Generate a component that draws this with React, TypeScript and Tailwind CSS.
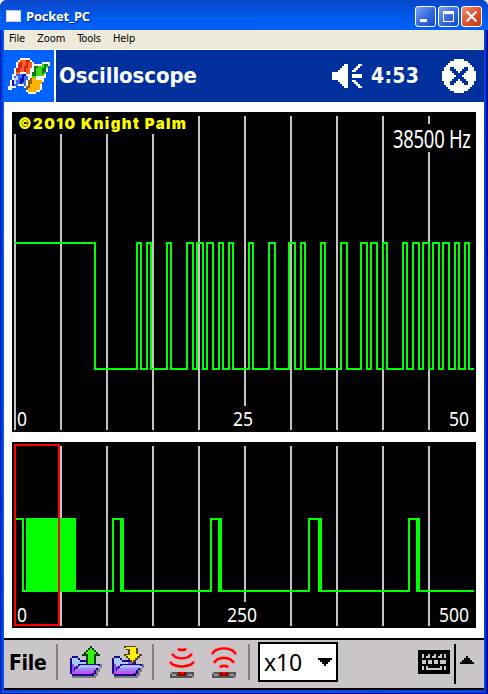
import React from 'react';

const MENU = ['File', 'Zoom', 'Tools', 'Help'];

const GRID = [2, 48, 94, 140, 186, 232, 278, 324, 370, 416];

// [rise, fall] positions of every pulse in the detail view
const PULSES = [
  [124, 128],
  [134, 138],
  [154, 158],
  [174, 180],
  [184, 190],
  [194, 200],
  [206, 210],
  [216, 220],
  [236, 240],
  [256, 262],
  [276, 282],
  [288, 292],
  [308, 312],
  [328, 334],
  [348, 354],
  [358, 364],
  [370, 374],
  [390, 394],
  [400, 406],
  [410, 416],
  [420, 426],
  [430, 436],
  [442, 446],
  [452, 456],
];

// [rise, fall] for the bursts in the overview
const BURSTS = [
  [100, 108],
  [198, 206],
  [296, 306],
  [396, 404],
];

const windowsLogo = (
  <svg viewBox="24 174 126 108" className="h-9 w-[42px]" shapeRendering="crispEdges">
    <path
      fill="#fff"
      d="M60 174H90V180H96V186H102V192H126V186H150V198H144V216H138V234H132V246H126V270H120V276H108V282H84V276H78V264H72V258H48V264H36V270H24V258H30V240H36V222H42V204H48V186H54V180H60Z"
    />
    <path fill="#ff5a20" d="M60 180H90V186H96V204H90V222H78V216H60V222H48V204H54V186H60Z" />
    <path fill="#c82810" d="M54 192H60V186H66V204H60V216H48V204H54ZM78 180H90V186H84V204H78V216H72V198H78Z" />
    <path fill="#40d818" d="M102 198H126V192H144V204H138V222H132V228H108V234H96V222H102Z" />
    <path fill="#147814" d="M102 198H114V204H108V228H96V216H102ZM132 192H144V198H138V216H132V222H126V204H132Z" />
    <path fill="#3968ff" d="M48 222H78V228H84V240H78V258H72V252H54V258H36V246H42V228H48Z" />
    <path fill="#1010a0" d="M66 222H78V228H72V246H66V252H60V234H66ZM36 240H42V258H36Z" />
    <path fill="#b8d8ff" d="M48 228H54V240H48V252H42V234H48Z" />
    <path fill="#ffb000" d="M90 234H108V240H126V252H120V270H108V276H84V270H78V258H84V240H90Z" />
    <path fill="#906400" d="M90 234H96V252H90V264H84V270H78V258H84V240H90Z" />
  </svg>
);

const speaker = (
  <svg viewBox="264 192 90 72" className="h-6 w-[30px]" shapeRendering="crispEdges" fill="#fff">
    <path d="M264 216H282V210H288V204H294V198H300V192H312V264H300V258H294V252H288V246H282V240H264Z" />
    <path d="M324 222H354V234H324ZM324 210H330V204H336V198H342V192H354V198H348V204H342V210H336V216H324ZM324 240H336V246H342V252H348V258H354V264H342V258H336V252H330V246H324Z" />
  </svg>
);

const closeCircle = (
  <svg viewBox="594 174 102 102" className="h-[34px] w-[34px]" shapeRendering="crispEdges">
    <path
      fill="#fff"
      d="M630 174H660V180H672V186H678V192H684V198H690V210H696V240H690V252H684V258H678V264H672V270H660V276H630V270H618V264H612V258H606V252H600V240H594V210H600V198H606V192H612V186H618V180H630Z"
    />
    <path
      fill="#00309c"
      d="M618 198H630V204H636V210H642V216H648V210H654V204H660V198H672V210H666V216H660V222H654V228H660V234H666V240H672V252H660V246H654V240H648V234H642V240H636V246H630V252H618V240H624V234H630V228H636V222H630V216H624V210H618Z"
    />
  </svg>
);

const folder = (
  <>
    <path fill="#7b7b80" d="M222 228H282V222H288V210H294V204H300V192H306V204H300V216H294V228H288V234H216V228Z" />
    <path fill="#180890" d="M216 168H234V174H240V180H282V192H300V198H294V210H288V222H282V228H216V222H210V174H216Z" />
    <path fill="#a8ccff" d="M216 174H234V180H240V186H258V192H234V198H222V192H216Z" />
    <path fill="#9448f0" d="M216 192H222V198H228V204H222V216H216ZM258 186H276V192H258Z" />
    <path fill="#b0b4ff" d="M240 194H294V204H234V198H240Z" />
    <path fill="#9888fc" d="M230 204H288V210H282V213H226V208H230Z" />
    <path fill="#c850f0" d="M222 213H282V218H276V222H216V217H222Z" />
  </>
);

const openIcon = (
  <svg viewBox="210 138 96 96" className="h-8 w-8" shapeRendering="crispEdges">
    {folder}
    <path fill="#084008" d="M270 138H276V144H282V150H288V156H294V162H300V168H288V192H258V168H246V162H252V156H258V150H264V144H270Z" />
    <path fill="#38f010" d="M270 144H276V150H282V156H288V162H282V192H264V162H258V156H264V150H270Z" />
  </svg>
);

const saveIcon = (
  <svg viewBox="210 138 96 96" className="h-8 w-8" shapeRendering="crispEdges">
    {folder}
    <path fill="#504800" d="M246 138H282V144H288V162H300V168H294V174H288V180H282V186H276V192H270V186H264V180H258V174H252V168H246V162H258V150H252V144H246Z" />
    <path fill="#fff010" d="M252 141H282V162H291V168H285V174H279V180H273V186H270V180H264V174H258V168H252V165H264V147H252Z" />
  </svg>
);

const irBase = (
  <>
    <path fill="#555" d="M510 216H582V234H510Z" />
    <path fill="#999" d="M510 216H516V222H510ZM516 222H528V228H516ZM564 222H576V228H564ZM576 228H582V234H576Z" />
    <path fill="#900" d="M534 216H558V228H534Z" />
    <path fill="#f00" d="M540 216H552V222H540Z" />
  </>
);

const receiveIcon = (
  <svg viewBox="504 138 84 96" className="h-8 w-7">
    <g fill="none" strokeWidth="7">
      <path stroke="#f8a0a4" strokeWidth="10" d="M530 144L538 150H554L562 144M512 159L524 171Q546 180 566 171L579 159M507 182L516 194Q546 207 574 194L585 182" />
      <path stroke="#f00" d="M534 146L540 150H552L558 146M516 162L526 171Q546 179 565 171L576 162M510 186L519 194Q546 205 572 194L582 186" />
    </g>
    {irBase}
  </svg>
);

const sendIcon = (
  <svg viewBox="504 138 84 96" className="h-8 w-7">
    <g fill="none" strokeWidth="7">
      <path stroke="#f8a0a4" strokeWidth="10" d="M507 165L518 151Q546 136 573 151L585 165M512 191L524 178Q546 168 566 178L579 191M530 204L538 198H554L562 204" />
      <path stroke="#f00" d="M510 162L520 151Q546 139 571 151L582 162M516 188L526 178Q546 170 565 178L576 188M534 202L540 198H552L558 202" />
    </g>
    {irBase}
  </svg>
);

const keyboard = (
  <svg viewBox="0 0 32 24" className="h-6 w-8" shapeRendering="crispEdges">
    <path d="M0 0H32V24H0Z" />
    <path
      fill="#cbc7cb"
      d="M4 4h2v4h-2zM8 4h4v4h-4zM14 4h4v4h-4zM20 4h4v4h-4zM26 4h2v4h-2zM4 10h4v4h-4zM10 10h4v4h-4zM16 10h4v4h-4zM22 10h6v4h-6zM4 16h2v4h-2zM8 16h16v4h-16zM26 16h2v4h-2z"
    />
    <path d="M10 16H22V18H10ZM8 4h2v2h-2zM14 4h2v2h-2zM20 4h2v2h-2z" />
  </svg>
);

type LabelProps = {
  x: number;
  y: number;
  width: number;
  size?: number;
  children: string;
};

// x is the right edge of the label
function Label({ x, y, width, size = 19, children }: LabelProps) {
  return (
    <text
      x={x}
      y={y}
      fill="#fff"
      fontSize={size}
      textAnchor="end"
      textLength={width}
      lengthAdjust="spacingAndGlyphs"
      className="font-['Noto_Sans',sans-serif]"
    >
      {children}
    </text>
  );
}

function DetailChart() {
  const wave = PULSES.map(([up, down]) => `H${up + 1}V131H${down + 1}V257`).join('');

  return (
    <svg width="464" height="320" className="block bg-black">
      <g fill="#c6c3c6" shapeRendering="crispEdges">
        {GRID.map((x) => {
          const top = x < 150 ? 22 : 4;
          const bottom = x === 232 ? 294 : 318;
          return <rect key={x} x={x} y={top} width="2" height={bottom - top} />;
        })}
      </g>
      <rect x="380" y="12" width="82" height="28" />
      <path
        d={`M2 131H83V257${wave}H462`}
        fill="none"
        stroke="#00ff00"
        strokeWidth="2"
        shapeRendering="crispEdges"
      />
      <text
        x="6"
        y="17"
        fill="#ffff00"
        fontSize="15"
        textLength="168"
        lengthAdjust="spacing"
        className="font-['Inter',sans-serif] font-black"
      >
        ©2010 Knight Palm
      </text>
      <text
        transform="translate(381 36) scale(0.74 1)"
        fill="#fff"
        className="font-['Noto_Sans',sans-serif] text-[25px] tracking-[-0.4px]"
      >
        38500 Hz
      </text>
      <Label x={15} y={314} width={10}>0</Label>
      <Label x={241} y={314} width={20}>25</Label>
      <Label x={457} y={314} width={20}>50</Label>
    </svg>
  );
}

function OverviewChart() {
  const wave = BURSTS.map(([up, down]) => `H${up + 1}V77H${down + 1}V149`).join('');

  return (
    <svg width="464" height="186" className="block bg-black" shapeRendering="crispEdges">
      {GRID.map((x) => (
        <rect key={x} x={x} y="4" width="2" height={x === 232 ? 156 : 180} fill="#c6c3c6" />
      ))}
      <path d={`M2 77H11V149${wave}H462`} fill="none" stroke="#00ff00" strokeWidth="2" />
      <rect x="14" y="76" width="50" height="74" fill="#00ff00" />
      {BURSTS.map(([, down]) => (
        <rect key={down} x={down} y="76" width="4" height="74" fill="#00ff00" />
      ))}
      <rect x="3" y="3" width="44" height="180" fill="none" stroke="#ff0000" strokeWidth="2" />
      <Label x={15} y={180} width={10}>0</Label>
      <Label x={245} y={180} width={30}>250</Label>
      <Label x={457} y={180} width={30}>500</Label>
    </svg>
  );
}

type WindowButtonProps = {
  close?: boolean;
  children: React.ReactNode;
};

function WindowButton({ close, children }: WindowButtonProps) {
  return (
    <button
      className={`h-[21px] w-[21px] rounded-[3px] border border-white bg-linear-to-br ${
        close ? 'from-[#f09070] via-[#e2512c] to-[#c63a10]' : 'from-[#7ba2f0] via-[#3b6de0] to-[#1246cc]'
      }`}
    >
      <svg viewBox="0 0 19 19" className="block h-[19px] w-[19px]" fill="#fff" stroke="none">
        {children}
      </svg>
    </button>
  );
}

function TitleBar() {
  return (
    <div className="flex h-[30px] items-center rounded-t-[7px] bg-linear-to-b from-[#0a46c8] via-[#0058e8] to-[#0060fc] pt-[3px] pr-1.5 pl-1.5">
      <div className="mb-0.5 h-3 w-[15px] border border-[#d8d8d8] border-t-[#a8c4e8] bg-white" />
      <span className="mb-px ml-[5px] flex-1 font-['Open_Sans',sans-serif] text-[13px] leading-4 font-bold tracking-[-0.25px] text-white [text-shadow:1px_1px_#0a2a90]">
        Pocket_PC
      </span>
      <div className="flex gap-0.5">
        <WindowButton>
          <path d="M4 12H11V15H4Z" />
        </WindowButton>
        <WindowButton>
          <path fillRule="evenodd" d="M4 4H15V15H4ZM5 7V14H14V7Z" />
        </WindowButton>
        <WindowButton close>
          <path d="M4.5 4.5L14.5 14.5M14.5 4.5L4.5 14.5" stroke="#fff" strokeWidth="2.2" />
        </WindowButton>
      </div>
    </div>
  );
}

function Toolbar() {
  return (
    <div className="flex h-[52px] items-start border-y-2 border-black bg-[#c9c5c9] pt-0.5 pl-1">
      <span className="mt-[5px] w-12 pl-px font-['DejaVu_Sans_Condensed','DejaVu_Sans',sans-serif] text-[21px] leading-8 font-bold tracking-[-0.3px] text-black">
        File
      </span>
      <div className="mt-0.5 h-9 w-0.5 bg-[#848284]" />
      <div className="mt-1 ml-3 flex gap-2.5">
        {openIcon}
        {saveIcon}
      </div>
      <div className="mt-0.5 ml-2 h-9 w-0.5 bg-[#848284]" />
      <div className="mt-1 ml-3.5 flex gap-3.5">
        {receiveIcon}
        {sendIcon}
      </div>
      <div className="mt-0.5 ml-2.5 h-9 w-0.5 bg-[#848284]" />
      <button className="ml-2 flex h-10 w-20 items-center border-2 border-black bg-white pl-1">
        <span className="-mt-px w-[54px] text-left font-['Noto_Sans',sans-serif] text-[23px] leading-8 tracking-[-0.1px] text-black">
          x10
        </span>
        <svg viewBox="0 0 14 8" className="h-2 w-3.5" shapeRendering="crispEdges">
          <path d="M0 0H14V2H12V4H10V6H8V8H6V6H4V4H2V2H0Z" />
        </svg>
      </button>
      <div className="mt-2 ml-20">{keyboard}</div>
      <div className="mt-0.5 ml-1 h-10 w-0.5 bg-black" />
      <svg viewBox="0 0 14 8" className="mt-3.5 ml-1 h-2 w-3.5" shapeRendering="crispEdges">
        <path d="M0 8H14V6H12V4H10V2H8V0H6V2H4V4H2V6H0Z" />
      </svg>
    </div>
  );
}

export default function App() {
  return (
    <div className="h-[694px] w-[488px] bg-[#e8ecf4]">
      <div className="h-full rounded-t-[7px] bg-linear-to-r from-[#0010c0] from-0% via-[#1060f0] via-[4px] to-[#0040e8] shadow-[inset_-2px_-1px_0_#001090]">
        <TitleBar />
        <div className="mx-1 shadow-[0_2px_0_#0848e8]">
          <nav className="flex h-5 gap-3 border-b border-white bg-[#eeeada] pl-[5px] font-['DejaVu_Sans_Condensed','DejaVu_Sans',sans-serif] text-[11px] leading-[18px] tracking-[-0.1px] text-black">
            {MENU.map((item) => (
              <span key={item}>{item}</span>
            ))}
          </nav>
          <header className="flex h-[52px] items-center bg-[#00309c] text-white">
            <div className="flex h-full w-[52px] items-center border-r-2 border-white bg-[#0063ff] pl-1">
              {windowsLogo}
            </div>
            <h1 className="ml-[3px] w-[273px] font-['DejaVu_Sans_Condensed','DejaVu_Sans',sans-serif] text-[22px] leading-8 font-bold tracking-[-0.1px]">
              Oscilloscope
            </h1>
            {speaker}
            <span className="ml-[9px] w-[71px] font-['DejaVu_Sans_Condensed','DejaVu_Sans',sans-serif] text-[21px] leading-8 font-bold tracking-[0.3px]">
              4:53
            </span>
            {closeCircle}
          </header>
          <main className="flex h-[536px] flex-col gap-2.5 bg-white px-2 pt-2.5">
            <DetailChart />
            <OverviewChart />
          </main>
          <Toolbar />
        </div>
      </div>
    </div>
  );
}
